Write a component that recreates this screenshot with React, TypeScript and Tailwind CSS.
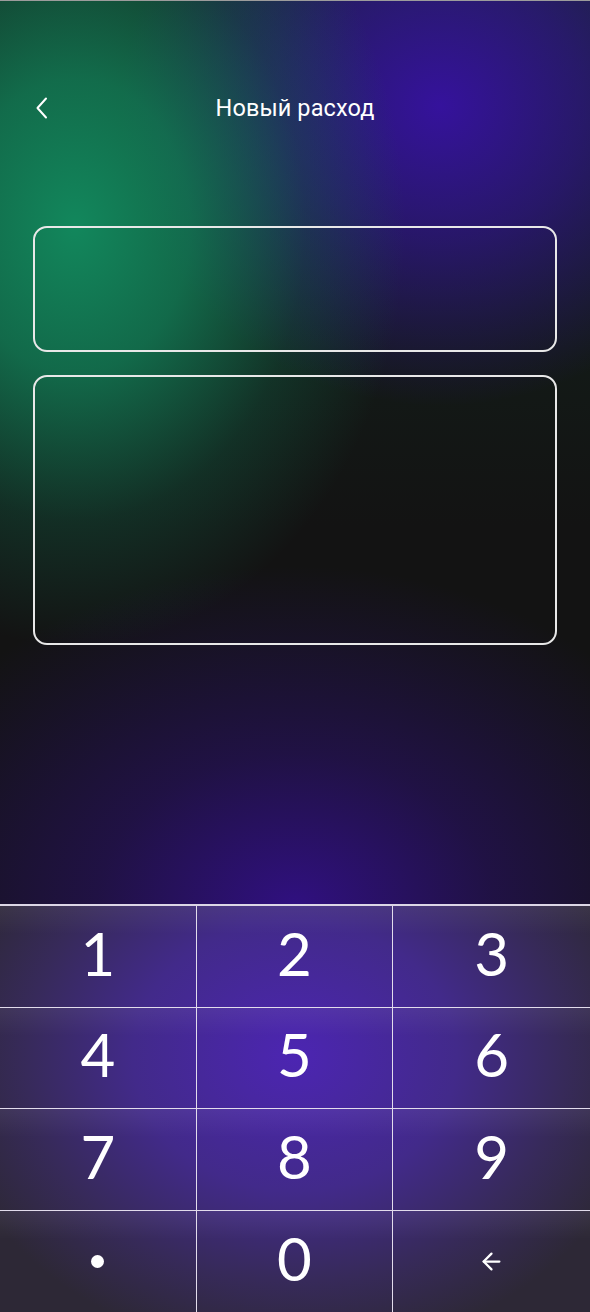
import { ArrowLeft } from "lucide-react";

const keys = ["1", "2", "3", "4", "5", "6", "7", "8", "9", ".", "0", "back"];

function Key({ k, i }: { k: string; i: number }) {
  const lastCol = i % 3 === 2;
  const lastRow = i >= 9;
  return (
    <button
      className={
        "relative flex items-center justify-center bg-[linear-gradient(to_bottom,rgba(255,255,255,0.06),rgba(255,255,255,0)_28%)] text-white " +
        (lastCol ? "" : "border-r border-[#e2dcec] ") +
        (lastRow ? "" : "border-b border-[#e2dcec]")
      }
    >
      {k === "." ? (
        <span className="block h-[13px] w-[13px] rounded-full bg-white" />
      ) : k === "back" ? (
        <ArrowLeft className="h-[27px] w-[27px]" strokeWidth={2} />
      ) : (
        <span className="-mt-[7px] text-[60px] font-normal leading-none [font-family:Lato,'Open_Sans',sans-serif]">
          {k}
        </span>
      )}
    </button>
  );
}

export default function App() {
  return (
    <div className="flex h-[1312px] w-[590px] flex-col overflow-hidden border-t border-[#9c9c9c] bg-[#131313] bg-[radial-gradient(ellipse_330px_420px_at_75px_225px,#12875c_0%,rgba(18,128,88,0.78)_35%,rgba(18,110,78,0.3)_70%,rgba(18,100,70,0)_100%),radial-gradient(ellipse_320px_300px_at_440px_105px,#35129c_0%,rgba(53,18,156,0.6)_45%,rgba(53,18,156,0)_100%),radial-gradient(ellipse_440px_340px_at_295px_905px,#301080_0%,rgba(48,16,128,0.45)_45%,rgba(48,16,128,0)_100%),linear-gradient(to_bottom,#13281f,#131313_40%)] [font-family:Roboto,'Liberation_Sans',sans-serif]">
      <header className="relative mt-[87px] flex h-[42px] items-center justify-center">
        <button className="absolute left-[34px] top-[9px] text-white">
          <svg width="16" height="22" viewBox="0 0 16 22" fill="none">
            <polyline
              points="12,1.5 3.5,11 12,20.5"
              stroke="white"
              strokeWidth="2"
              strokeLinecap="round"
              strokeLinejoin="round"
            />
          </svg>
        </button>
        <h1 className="text-[23.5px] font-normal tracking-[0.1px] text-white">Новый расход</h1>
      </header>

      <div className="mx-[33px] mt-[96px] h-[126px] rounded-[14px] border-2 border-[#e8e8e8]" />
      <div className="mx-[33px] mt-[23px] h-[270px] rounded-[14px] border-2 border-[#e8e8e8]" />

      <div className="mt-auto grid h-[408px] grid-cols-3 grid-rows-4 border-t-2 border-[#dcd6e6] bg-[radial-gradient(ellipse_360px_300px_at_295px_150px,#4c25b2_0%,#422a8a_45%,#372a5a_75%,#2d2836_100%)]">
        {keys.map((k, i) => (
          <Key key={k} k={k} i={i} />
        ))}
      </div>
    </div>
  );
}
